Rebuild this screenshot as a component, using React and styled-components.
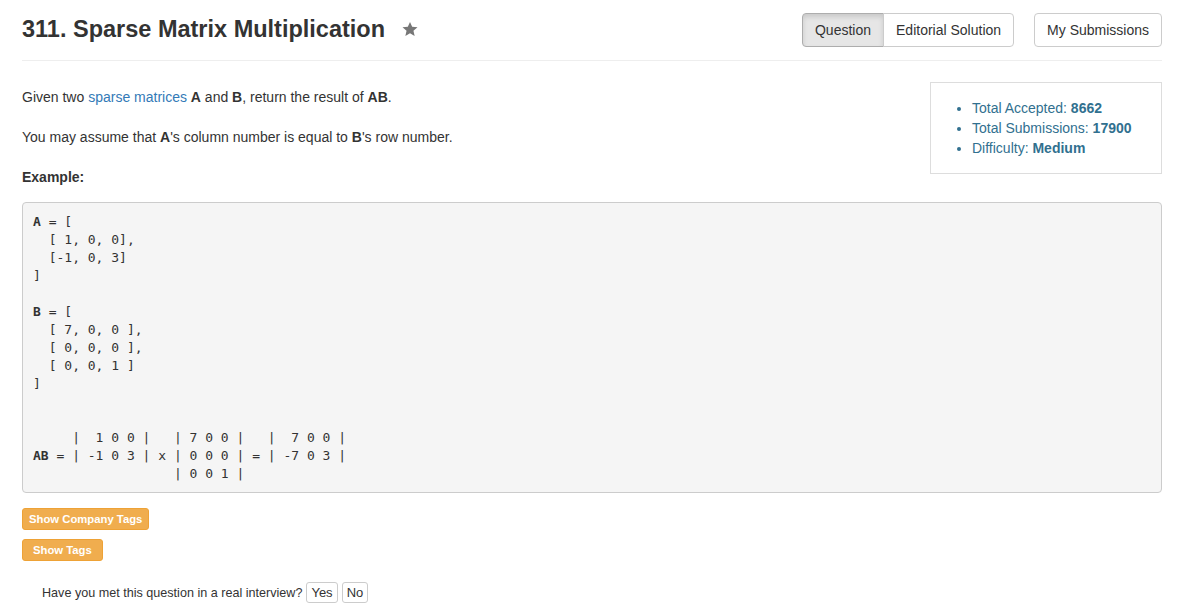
import React from 'react';
import styled, { createGlobalStyle } from 'styled-components';

const GlobalStyle = createGlobalStyle`
  * { box-sizing: border-box; }
  body {
    margin: 0;
    background: #fff;
    font-family: 'Liberation Sans', Arial, sans-serif;
    font-size: 14px;
    line-height: 20px;
    color: #333;
  }
`;

const Page = styled.div`
  width: 1140px;
  margin-left: 22px;
`;

const Header = styled.div`
  display: flex;
  align-items: center;
  justify-content: space-between;
  height: 61px;
  border-bottom: 1px solid #eee;
`;

const Title = styled.h1`
  display: flex;
  align-items: center;
  margin: -3px 0 0;
  font-size: 23.5px;
  font-weight: bold;
  line-height: 28px;
  color: #333;
`;

const Star = styled.svg`
  margin-left: 16px;
  width: 18px;
  height: 18px;
  fill: #777;
`;

const Actions = styled.div`
  display: flex;
  gap: 20px;
  margin-top: 0;
`;

const ButtonGroup = styled.div`
  display: flex;
`;

const NavButton = styled.button`
  font-family: inherit;
  font-size: 14px;
  line-height: 20px;
  padding: 6px 12px;
  height: 34px;
  color: #333;
  cursor: pointer;
  border: 1px solid ${p => (p.$active ? '#adadad' : '#ccc')};
  background: ${p => (p.$active ? '#e6e6e6' : '#fff')};
  box-shadow: ${p => (p.$active ? 'inset 0 3px 5px rgba(0,0,0,.125)' : 'none')};
  border-radius: 4px;

  ${ButtonGroup} > & {
    border-radius: 0;
  }
  ${ButtonGroup} > &:first-child {
    border-radius: 4px 0 0 4px;
  }
  ${ButtonGroup} > &:last-child {
    border-radius: 0 4px 4px 0;
    margin-left: -1px;
  }
`;

const Body = styled.div`
  display: flex;
  justify-content: space-between;
  align-items: flex-start;
  padding-top: 21px;
`;

const Description = styled.div`
  padding-top: 5px;
`;

const Para = styled.p`
  margin: 0 0 20px;

  &:last-child {
    margin-bottom: 15px;
  }
`;

const Link = styled.a`
  color: #337ab7;
  text-decoration: none;
`;

const StatsBox = styled.div`
  width: 232px;
  border: 1px solid #ddd;
  padding: 15px 0 15px;
`;

const StatsList = styled.ul`
  margin: 0;
  padding-left: 41px;
  color: #31708f;
  li { line-height: 20px; }
`;

const Code = styled.pre`
  margin: 0 0 15px;
  padding: 10px 10px 9px;
  background: #f5f5f5;
  border: 1px solid #ccc;
  border-radius: 4px;
  font-family: 'DejaVu Sans Mono', 'Liberation Mono', monospace;
  font-size: 13px;
  line-height: 18px;
  color: #333;
  white-space: pre;
`;

const TagButton = styled.button`
  display: block;
  font-family: inherit;
  font-size: 11.3px;
  font-weight: bold;
  line-height: 18px;
  height: 22px;
  padding: 1px ${p => p.$pad}px;
  margin-bottom: 9px;
  color: #fff;
  background: #f0ad4e;
  border: 1px solid #eea236;
  border-radius: 3px;
  cursor: pointer;
`;

const Interview = styled.div`
  display: flex;
  align-items: center;
  gap: 4px;
  padding-left: 20px;
  margin-top: 21px;
  font-size: 12.6px;
`;

const SmallButton = styled.button`
  font-family: inherit;
  font-size: 13px;
  line-height: 17px;
  height: 21px;
  padding: 1px 4px;
  color: #333;
  background: #fff;
  border: 1px solid #ccc;
  border-radius: 3px;
  cursor: pointer;
`;

const code = (
  <>
    <b>A</b>{` = [
  [ 1, 0, 0],
  [-1, 0, 3]
]

`}<b>B</b>{` = [
  [ 7, 0, 0 ],
  [ 0, 0, 0 ],
  [ 0, 0, 1 ]
]


     |  1 0 0 |   | 7 0 0 |   |  7 0 0 |
`}<b>AB</b>{` = | -1 0 3 | x | 0 0 0 | = | -7 0 3 |
                  | 0 0 1 |`}
  </>
);

export default function App() {
  return (
    <Page>
      <GlobalStyle />
      <Header>
        <Title>
          311. Sparse Matrix Multiplication
          <Star viewBox="0 0 24 24">
            <path d="M12 2.5l2.9 6.6 7.1.6-5.4 4.7 1.6 7-6.2-3.7-6.2 3.7 1.6-7L2 9.7l7.1-.6z" />
          </Star>
        </Title>
        <Actions>
          <ButtonGroup>
            <NavButton $active>Question</NavButton>
            <NavButton>Editorial Solution</NavButton>
          </ButtonGroup>
          <NavButton>My Submissions</NavButton>
        </Actions>
      </Header>

      <Body>
        <Description>
          <Para>
            Given two <Link href="#">sparse matrices</Link> <b>A</b> and <b>B</b>, return the result of <b>AB</b>.
          </Para>
          <Para>
            You may assume that <b>A</b>'s column number is equal to <b>B</b>'s row number.
          </Para>
          <Para><b>Example:</b></Para>
        </Description>
        <StatsBox>
          <StatsList>
            <li>Total Accepted: <b>8662</b></li>
            <li>Total Submissions: <b>17900</b></li>
            <li>Difficulty: <b>Medium</b></li>
          </StatsList>
        </StatsBox>
      </Body>

      <Code>{code}</Code>

      <TagButton $pad={6}>Show Company Tags</TagButton>
      <TagButton $pad={10}>Show Tags</TagButton>

      <Interview>
        Have you met this question in a real interview?
        <SmallButton>Yes</SmallButton>
        <SmallButton>No</SmallButton>
      </Interview>
    </Page>
  );
}
